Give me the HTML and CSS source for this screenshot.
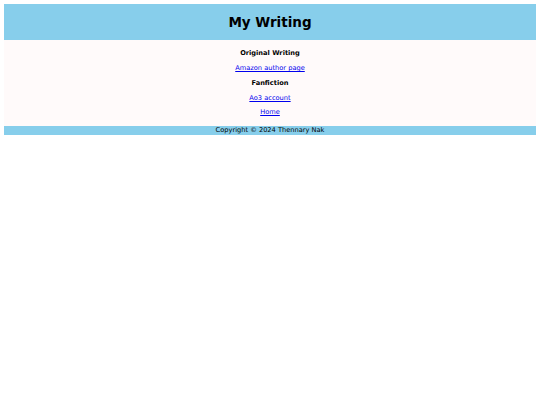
FILE: index.html
```html
<!DOCTYPE html>
<html>
<head>
<meta charset="utf-8">
<link rel="stylesheet" href="styles.css">
</head>
<body>
<header class="top">
  <h1 class="title">My Writing</h1>
</header>
<main class="content">
  <h2 class="section">Original Writing</h2>
  <p class="item"><a href="#">Amazon author page</a></p>
  <h2 class="section">Fanfiction</h2>
  <p class="item"><a href="#">Ao3 account</a></p>
  <p class="item"><a href="#">Home</a></p>
</main>
<footer class="bottom">Copyright © 2024 Thennary Nak</footer>
</body>
</html>
```
FILE: styles.css
```css
body {
  margin: 4px;
  font-family: "DejaVu Sans", Verdana, sans-serif;
  background: #ffffff;
}
.top {
  background: #87ceeb;
  height: 36px;
  display: flex;
  align-items: center;
  justify-content: center;
}
.title {
  margin: 0;
  font-size: 13.5px;
  font-weight: bold;
  color: #000;
}
.content {
  background: #fffafa;
  padding: 6.4px 0 5.8px;
  text-align: center;
  font-size: 6.65px;
}
.section {
  margin: 0;
  font-size: 6.65px;
  line-height: 14.75px;
  font-weight: bold;
}
.item {
  margin: 0;
  line-height: 14.75px;
}
.item a {
  color: #0000ee;
}
.bottom {
  background: #87ceeb;
  text-align: center;
  font-size: 6.65px;
  line-height: 9px;
  color: #000;
}
```
